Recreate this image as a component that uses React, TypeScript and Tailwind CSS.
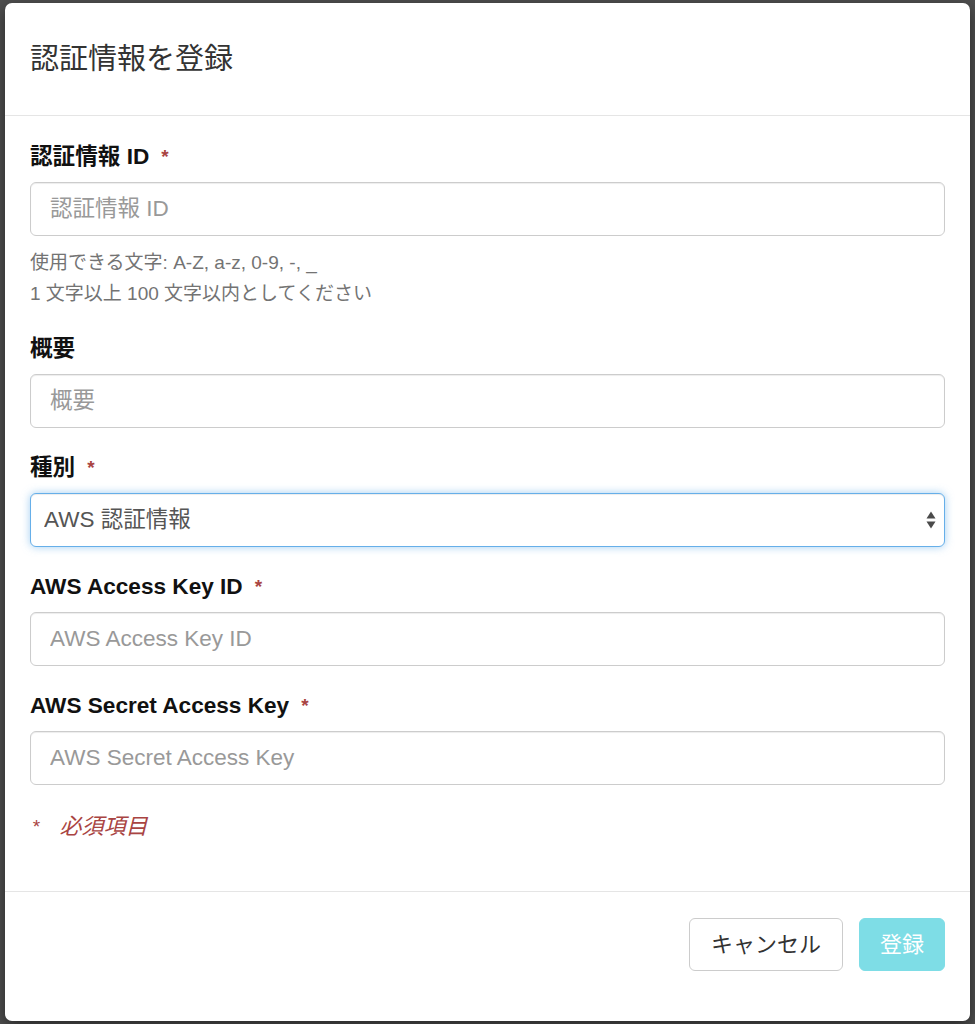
import type { ReactNode } from 'react';

const font = { fontFamily: '"Liberation Sans", "Noto Sans CJK JP", sans-serif' };

function Label({ children, required }: { children: ReactNode; required?: boolean }) {
  return (
    <label className="mb-[10px] flex items-center text-[22.6px] font-bold leading-[30px] text-[#111]">
      {children}
      {required && <span className="ml-[12px] text-[19px] text-[#a94442]">*</span>}
    </label>
  );
}

function TextInput({ placeholder }: { placeholder: string }) {
  return (
    <input
      type="text"
      placeholder={placeholder}
      className="block h-[54px] w-full rounded-[6px] border border-[#cccccc] bg-white px-[19px] text-[22.5px] text-[#555] shadow-[inset_0_1px_1px_rgba(0,0,0,0.075)] placeholder:text-[#999] focus:outline-none"
    />
  );
}

export default function App() {
  return (
    <div className="min-h-screen bg-[#4f4f4f] px-[5px] pt-[3px]" style={font}>
      <div className="w-[965px] overflow-hidden rounded-[7px] bg-white shadow-[0_5px_15px_rgba(0,0,0,0.5)]">
        {/* Header */}
        <div className="flex h-[113px] items-center border-b border-[#e5e5e5] px-[25px]">
          <h4 className="text-[29px] font-normal leading-[40px] text-[#333]">認証情報を登録</h4>
        </div>

        {/* Body */}
        <div className="px-[25px] pb-[47px] pt-[26px]">
          <div className="mb-[25px]">
            <Label required>認証情報 ID</Label>
            <TextInput placeholder="認証情報 ID" />
            <div className="mt-[11px] text-[19px] leading-[31px] text-[#737373]">
              <p>使用できる文字: A-Z, a-z, 0-9, -, _</p>
              <p>1 文字以上 100 文字以内としてください</p>
            </div>
          </div>

          <div className="mb-[25px]">
            <Label>概要</Label>
            <TextInput placeholder="概要" />
          </div>

          <div className="mb-[25px]">
            <Label required>種別</Label>
            <div className="relative">
              <select
                defaultValue="aws"
                className="block h-[54px] w-full appearance-none rounded-[6px] border border-[#66afe9] bg-white pl-[13px] pr-[40px] text-[22.5px] text-[#555] shadow-[inset_0_1px_1px_rgba(0,0,0,0.075),0_0_8px_rgba(102,175,233,0.6)] outline-none"
              >
                <option value="aws">AWS 認証情報</option>
              </select>
              <svg
                className="pointer-events-none absolute right-[9px] top-1/2 h-[18px] w-[10px] -translate-y-1/2"
                viewBox="0 0 10 18"
              >
                <path d="M5 0.5 L9.5 7.5 L0.5 7.5 Z" fill="#4a4a4a" />
                <path d="M5 17.5 L9.5 10.5 L0.5 10.5 Z" fill="#4a4a4a" />
              </svg>
            </div>
          </div>

          <div className="mb-[25px]">
            <Label required>AWS Access Key ID</Label>
            <TextInput placeholder="AWS Access Key ID" />
          </div>

          <div className="mb-[25px]">
            <Label required>AWS Secret Access Key</Label>
            <TextInput placeholder="AWS Secret Access Key" />
          </div>

          <p className="flex items-center text-[22px] italic leading-[34px] text-[#a94442]">
            <span className="ml-[2px] mr-[20px] text-[19px]">*</span>
            必須項目
          </p>
        </div>

        {/* Footer */}
        <div className="flex justify-end gap-[16px] border-t border-[#e5e5e5] px-[25px] pb-[50px] pt-[26px]">
          <button
            type="button"
            className="h-[53px] w-[154px] rounded-[6px] border border-[#cccccc] bg-white text-[22px] text-[#333]"
          >
            キャンセル
          </button>
          <button
            type="submit"
            disabled
            className="h-[53px] w-[86px] rounded-[6px] border border-[#7edde6] bg-[#7edde6] text-[22px] text-white"
          >
            登録
          </button>
        </div>
      </div>
    </div>
  );
}
